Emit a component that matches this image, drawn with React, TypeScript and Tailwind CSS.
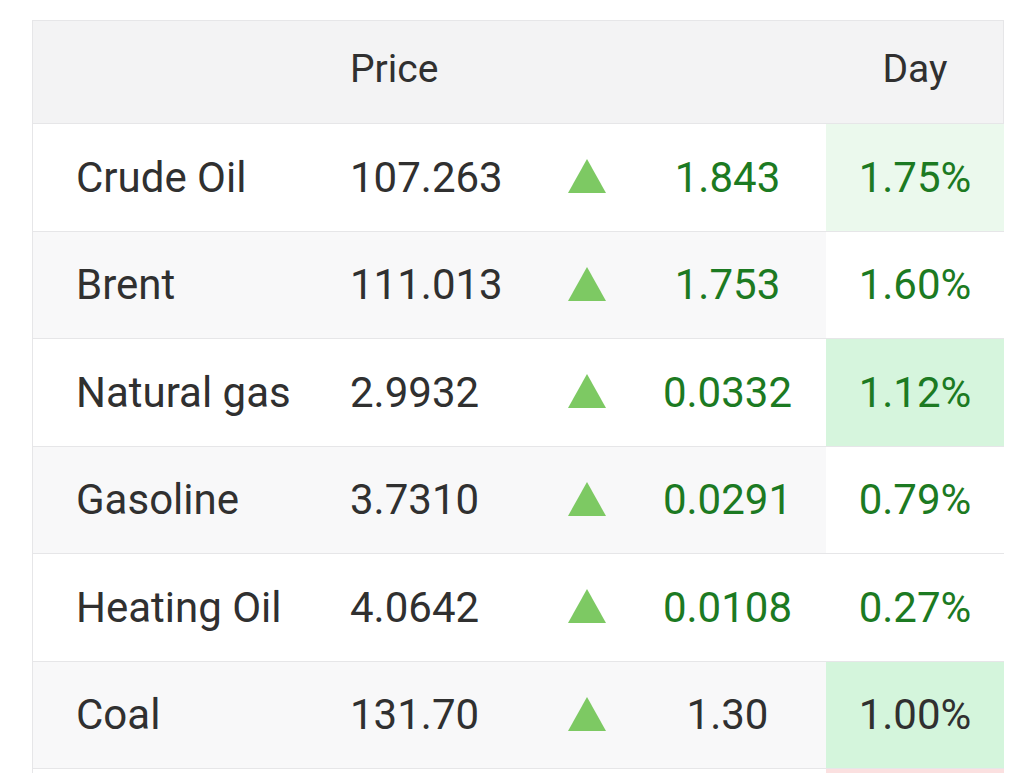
const rows = [
  { name: 'Crude Oil', price: '107.263', change: '1.843', day: '1.75%', dayBg: 'bg-[#ebf9ed]', alt: false, changeDark: false },
  { name: 'Brent', price: '111.013', change: '1.753', day: '1.60%', dayBg: 'bg-white', alt: true, changeDark: false },
  { name: 'Natural gas', price: '2.9932', change: '0.0332', day: '1.12%', dayBg: 'bg-[#d6f5dd]', alt: false, changeDark: false },
  { name: 'Gasoline', price: '3.7310', change: '0.0291', day: '0.79%', dayBg: 'bg-white', alt: true, changeDark: false },
  { name: 'Heating Oil', price: '4.0642', change: '0.0108', day: '0.27%', dayBg: 'bg-white', alt: false, changeDark: false },
  { name: 'Coal', price: '131.70', change: '1.30', day: '1.00%', dayBg: 'bg-[#d4f5dc]', alt: true, changeDark: true },
];

const cols = 'grid grid-cols-[298px_213px_85px_197px_178px]';

function Up() {
  return (
    <svg width="38" height="34" viewBox="0 0 38 34">
      <polygon points="19,0 38,34 0,34" fill="#7dc963" />
    </svg>
  );
}

export default function App() {
  return (
    <div className="h-[773px] overflow-hidden bg-white pt-[20px] pl-[32px] font-['Roboto',sans-serif] text-[42px] text-[#303030]">
      <div className="w-[972px] border-x border-t border-[#e6e6e8]">
        {/* header */}
        <div className={`${cols} h-[102px] bg-[#f3f3f4] items-center`}>
          <div />
          <div className="pl-[19px] text-[39px] -mt-[6px]">Price</div>
          <div />
          <div />
          <div className="text-center text-[39px] -mt-[6px]">Day</div>
        </div>

        {rows.map((r) => (
          <div
            key={r.name}
            className={`${cols} h-[107.5px] border-t border-[#e6e6e8] ${r.alt ? 'bg-[#f8f8f9]' : 'bg-white'}`}
          >
            <div className="pl-[43px] flex items-center">{r.name}</div>
            <div className="pl-[19px] flex items-center">{r.price}</div>
            <div className="flex items-center justify-center pb-[2px]">
              <Up />
            </div>
            <div className={`flex items-center justify-center ${r.changeDark ? 'text-[#303030]' : 'text-[#1c7a22]'}`}>
              {r.change}
            </div>
            <div
              className={`flex items-center justify-center ${r.dayBg} ${r.changeDark ? 'text-[#303030]' : 'text-[#1c7a22]'}`}
            >
              {r.day}
            </div>
          </div>
        ))}

        {/* next row, only its top edge is on screen */}
        <div className={`${cols} h-[40px] border-t border-[#e6e6e8] bg-white`}>
          <div />
          <div />
          <div />
          <div />
          <div className="bg-[#fbe0e0]" />
        </div>
      </div>
    </div>
  );
}
